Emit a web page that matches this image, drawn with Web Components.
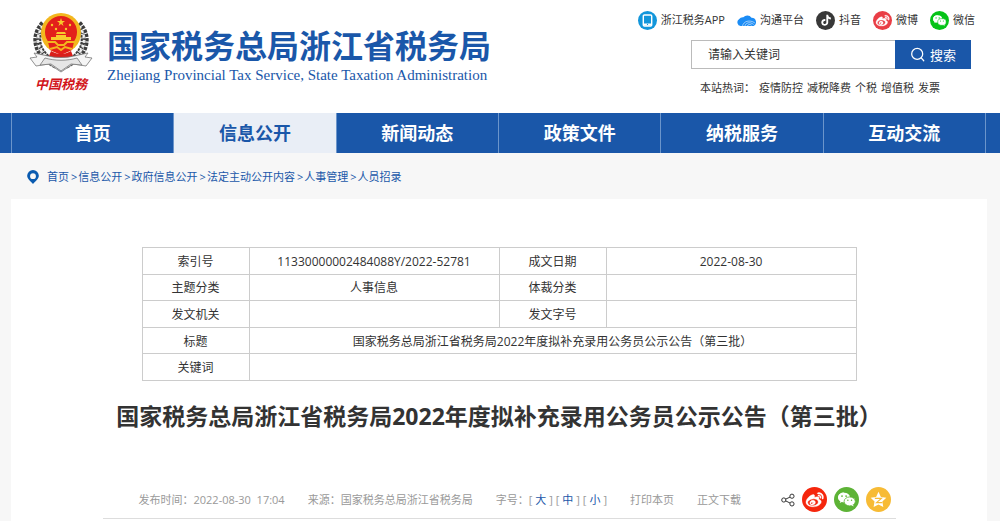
<!DOCTYPE html>
<html lang="zh-CN">
<head>
<meta charset="utf-8">
<meta name="viewport" content="width=device-width, initial-scale=1">
<title>国家税务总局浙江省税务局</title>
<style>
  :root { --blue: #1a57a9; --ink: #333; --muted: #999; --line: #ccc; }
  body { display: flex; flex-direction: column; min-height: 100vh; margin: 0; background: #f7f7f7; color: var(--ink); font: 11px/16px "Open Sans", "Noto Sans CJK SC", sans-serif; }
  main { display: block; flex: 1; margin: 0 13px 0 11px; padding: 48px 0 0; background: #fff; }
</style>
</head>
<body>
<site-header></site-header>
<main-nav>
  <nav-item href="#home">首页</nav-item>
  <nav-item href="#info" current>信息公开</nav-item>
  <nav-item href="#news">新闻动态</nav-item>
  <nav-item href="#policy">政策文件</nav-item>
  <nav-item href="#service">纳税服务</nav-item>
  <nav-item href="#contact">互动交流</nav-item>
</main-nav>
<bread-crumb></bread-crumb>
<main>
  <doc-info></doc-info>
  <article-heading>国家税务总局浙江省税务局2022年度拟补充录用公务员公示公告（第三批）</article-heading>
  <article-meta></article-meta>
</main>

<script>
const define = (name, html, setup) => {
  const template = document.createElement('template');
  template.innerHTML = html;
  customElements.define(name, class extends HTMLElement {
    connectedCallback() {
      if (this.shadowRoot) return;
      this.attachShadow({ mode: 'open' }).append(template.content.cloneNode(true));
      if (setup) setup(this, this.shadowRoot);
    }
  });
};

const WEIBO = '<path d="M10.098 20.323c-3.977.391-7.414-1.406-7.672-4.02-.259-2.609 2.759-5.047 6.74-5.441 3.979-.394 7.413 1.404 7.671 4.018.259 2.6-2.759 5.049-6.737 5.439zM9.05 17.219c-.384.616-1.208.884-1.829.602-.612-.279-.793-.991-.406-1.593.379-.595 1.176-.861 1.793-.601.622.263.82.972.442 1.592zm1.27-1.627c-.141.237-.449.353-.689.253-.236-.09-.313-.361-.177-.586.138-.227.436-.346.672-.24.239.09.315.36.18.601zm.176-2.719c-1.893-.493-4.033.45-4.857 2.118-.836 1.704-.026 3.591 1.886 4.21 1.983.64 4.318-.341 5.132-2.179.8-1.793-.201-3.642-2.161-4.149zm7.563-1.224c-.346-.105-.57-.18-.405-.615.375-.977.42-1.804 0-2.404-.781-1.112-2.915-1.053-5.364-.03 0 0-.766.331-.571-.271.376-1.217.315-2.224-.27-2.809-1.338-1.337-4.869.045-7.888 3.08C1.309 10.87 0 13.273 0 15.348c0 3.981 5.099 6.395 10.086 6.395 6.536 0 10.888-3.801 10.888-6.82 0-1.822-1.547-2.854-2.915-3.284zm1.908-5.092c-.766-.856-1.908-1.187-2.96-.962-.436.09-.706.511-.616.932.09.42.511.691.932.602.511-.105 1.067.044 1.442.465.376.421.466.977.316 1.473-.136.406.089.856.51.992.405.119.857-.105.992-.512.33-1.021.12-2.178-.646-3.035zm2.418-2.195c-1.576-1.757-3.905-2.419-6.054-1.968-.496.104-.812.587-.706 1.081.104.496.586.813 1.082.707 1.532-.331 3.185.15 4.296 1.383 1.112 1.246 1.429 2.943.947 4.416-.165.48.106 1.007.586 1.157.479.165.991-.104 1.157-.586.675-2.088.241-4.478-1.338-6.235z"/>';
const wechat = bg => `<g fill="#fff"><path d="M9.4 4.6c-3.9 0-6.9 2.4-6.9 5.5 0 1.8 1 3.3 2.6 4.3l-.7 2.1 2.4-1.2c.8.2 1.7.3 2.6.3z"/><ellipse cx="9.4" cy="10.1" rx="6.7" ry="5.4"/><ellipse cx="15.8" cy="14.7" rx="6.4" ry="5.1" stroke="${bg}" stroke-width=".9"/><path d="m17.5 18.8 2.7 1.7-.6-2.3z"/></g><g fill="${bg}"><circle cx="7" cy="8.6" r="1"/><circle cx="11.7" cy="8.6" r="1"/><circle cx="13.7" cy="13.3" r=".8"/><circle cx="17.9" cy="13.3" r=".8"/></g>`;
const disc = color => `<circle cx="12" cy="12" r="12" fill="${color}"/>`;

const ICONS = {
  app: disc('#1296db') + '<rect x="6.7" y="5" width="10.6" height="14" rx="1.4" fill="none" stroke="#fff" stroke-width="1.8"/><path d="M7 15.8h10v2.6H7z" fill="#fff"/><circle cx="12" cy="17" r=".8" fill="#1296db"/>',
  cloud: '<path d="M4.500 18.900A4.700 4.700 0 0 1 2.500 10.400 6.200 6.200 0 0 1 8 8 6.500 6.500 0 0 1 18.300 8.500 5.500 5.500 0 0 1 21 18.900z" fill="#1b8cf5"/><path d="M7 19c1-6 9-8.500 15.500-4M10 19c1-4 6-6 11-2M13 19c1-2 3-3 5.500-1" fill="none" stroke="#fff" stroke-width=".7"/>',
  douyin: disc('#383838') + '<path transform="translate(5.800 4.800) scale(.58)" d="M12.525.02c1.310-.02 2.610-.01 3.910-.02.08 1.530.63 3.090 1.750 4.170 1.120 1.110 2.700 1.620 4.240 1.790v4.030c-1.440-.05-2.890-.35-4.200-.97-.57-.26-1.100-.59-1.620-.93-.01 2.920.01 5.840-.02 8.750-.08 1.400-.54 2.790-1.350 3.940-1.310 1.920-3.580 3.170-5.910 3.210-1.430.08-2.860-.31-4.080-1.030-2.020-1.190-3.440-3.370-3.650-5.710-.02-.5-.03-1-.01-1.490.18-1.900 1.120-3.720 2.580-4.960 1.660-1.440 3.980-2.130 6.150-1.720.02 1.480-.04 2.960-.04 4.440-.99-.32-2.150-.23-3.020.37-.63.41-1.110 1.040-1.360 1.750-.21.51-.15 1.070-.14 1.610.24 1.640 1.820 3.020 3.500 2.870 1.120-.01 2.190-.66 2.770-1.610.19-.33.4-.67.41-1.060.1-1.790.06-3.570.07-5.360.01-4.030-.01-8.050.02-12.070z" fill="#fff"/>',
  weibo: disc('#e93e46') + `<g transform="translate(3.800 3.800) scale(.7)" fill="#fff" stroke="#fff" stroke-width=".5">${WEIBO}</g>`,
  wechat: disc('#05c317') + `<g transform="translate(1.800 1.500) scale(.84)">${wechat('#05c317')}</g>`,
  'share-weibo': disc('#f5260d') + `<g transform="translate(3.800 3.800) scale(.7)" fill="#fff" stroke="#fff" stroke-width=".5">${WEIBO}</g>`,
  'share-wechat': disc('#5db336') + `<g transform="translate(1.800 1.500) scale(.84)">${wechat('#5db336')}</g>`,
  'share-qzone': disc('#f7bb35') + '<path d="m12 4.600 2.300 4.900 5.200.7-3.800 3.700.9 5.300-4.600-2.500-4.700 2.500.9-5.300-3.700-3.700 5.200-.7z" fill="#fff"/><path d="M8.500 10.900h6.300l-4.700 4.100h5.600" fill="none" stroke="#f7bb35" stroke-width="1.100"/>',
  share: '<g fill="none" stroke="#333" stroke-width="1.700"><circle cx="4.800" cy="12" r="3.600"/><circle cx="18.800" cy="5.500" r="3.600"/><circle cx="18.800" cy="18.700" r="3.600"/><path d="m8 10.500 7.500-3.500M8 13.500l7.500 3.700"/></g>',
  search: '<g fill="none" stroke="#fff" stroke-width="2" stroke-linecap="round"><circle cx="11.500" cy="11" r="8.800"/><path d="m18 17.500 4 4.500"/></g>',
  pin: '<path d="M12 0a10 10 0 0 0-10 10c0 5 5 9 10 14 5-5 10-9 10-14A10 10 0 0 0 12 0zm0 5.500a5 5 0 1 1 0 10 5 5 0 0 1 0-10z" fill="#0a5bb0" fill-rule="evenodd"/>'
};

define('ui-icon', `
  <style>
    :host { display: block; flex: none; width: var(--icon, 19px); height: var(--icon, 19px); }
    svg { display: block; width: 100%; height: 100%; }
  </style>
  <svg viewBox="0 0 24 24" aria-hidden="true"></svg>`,
  (host, root) => { root.querySelector('svg').innerHTML = ICONS[host.getAttribute('name')]; });

define('tax-emblem', `
  <style>
    :host { display: flex; flex-direction: column; align-items: center; width: 64px; flex: none; }
    svg { display: block; width: 64px; height: 62px; }
    span { font-size: 13px; line-height: 20px; font-weight: 700; font-style: italic; color: #d2151b; white-space: nowrap; }
  </style>
  <svg viewBox="0 0 64 62" role="img" aria-label="税务徽标">
    <g fill="none">
      <path d="M15 12C3 25 7 43 28 53M49 12c12 13 8 31-13 41" stroke="#3d3d3d" stroke-width="8" stroke-dasharray="3 1"/>
      <path d="M14 14C4 27 9 42 27 51M50 14c10 13 5 28-13 37" stroke="#eee" stroke-width="2.500" stroke-dasharray="3 2"/>
      <path d="M11 17C4 29 8 42 24 50M53 17c7 12 3 25-13 33" stroke="#aaa" stroke-width="1" stroke-dasharray="2 2"/>
    </g>
    <circle cx="32" cy="21" r="20" fill="#f3b71e"/>
    <circle cx="32" cy="20" r="16" fill="#e3201b"/>
    <g fill="#f8ca2c">
      <path d="m32 6 1 3h3l-2.500 2 1 3-2.500-2-2.500 2 1-3L28 9h3z"/>
      <circle cx="23" cy="13" r="1.200"/><circle cx="41" cy="13" r="1.200"/><circle cx="27" cy="17" r="1.200"/><circle cx="37" cy="17" r="1.200"/>
      <path d="m27 22 1-2h8l1 2zm0 1h10v2h5v3H22v-3h5z"/>
    </g>
    <path d="M19 30h26l-2 8-11 5-11-5z" fill="#e3201b"/>
    <path d="M18 30h8l3 3h6l3-3h8M21 37l7-2 4 3 4-3 7 2" fill="none" stroke="#f3b71e" stroke-width="2"/>
    <path d="M22 39c7 4 13 4 20 0l2 5c-8 4-16 4-24 0z" fill="#d91f1b"/>
    <g fill="#f5f5f5" stroke="#777" stroke-width=".8">
      <path d="m1 46 7-1-3-4 14 3c7 2 19 2 26 0l14-3-3 4 7 1-6 8-13-2-12 8-12-8-13 2z"/>
      <path d="m11 53 5-7c10 3 22 3 32 0l5 7-11-1-10 7-10-7z" fill="#e6e6e6"/>
    </g>
  </svg>
  <span>中国税務</span>`);

define('quick-link', `
  <style>
    :host { display: block; }
    a { display: flex; align-items: center; gap: 4px; color: var(--ink); text-decoration: none; white-space: nowrap; }
  </style>
  <a href="#"><slot></slot></a>`,
  (host, root) => {
    const icon = document.createElement('ui-icon');
    icon.setAttribute('name', host.getAttribute('icon'));
    root.querySelector('a').prepend(icon);
  });

define('site-search', `
  <style>
    :host { display: block; }
    form { display: flex; height: 29px; }
    input { flex: 1; min-width: 0; box-sizing: border-box; margin: 0; padding: 0 16px; border: 1px solid #bbb; border-right: 0; border-radius: 0; font: inherit; font-size: 12px; color: var(--ink); background: #fff; }
    input::placeholder { color: var(--ink); opacity: 1; }
    button { display: flex; align-items: center; justify-content: center; gap: 5px; width: 76px; padding: 0; border: 0; background: var(--blue); color: #fff; font: inherit; font-size: 13px; cursor: pointer; --icon: 15px; }
  </style>
  <form onsubmit="return false">
    <input type="text" aria-label="搜索关键词" placeholder="请输入关键词">
    <button type="submit"><ui-icon name="search"></ui-icon>搜索</button>
  </form>`);

define('site-header', `
  <style>
    :host { display: block; background: #fff; }
    header { display: flex; justify-content: space-between; min-height: 113px; box-sizing: border-box; padding: 10px 25px 12px 29px; }
    .brand { display: flex; gap: 14px; padding-top: 2px; }
    .names { padding-top: 14px; color: var(--blue); white-space: nowrap; }
    h1 { margin: 0; font-size: 32px; line-height: 40px; font-weight: 700; }
    .names p { margin: 0; font: 15px/18px "Liberation Serif", serif; }
    .tools { display: flex; flex-direction: column; }
    .quick { display: flex; justify-content: flex-end; gap: 12px; height: 20px; align-items: center; }
    site-search { width: 280px; margin: 10px 4px 0 auto; }
    .hot { display: flex; gap: 4px; width: 271px; margin: 11px 4px 0 auto; white-space: nowrap; }
    .hot a { color: inherit; text-decoration: none; }
  </style>
  <header>
    <div class="brand">
      <tax-emblem></tax-emblem>
      <div class="names">
        <h1>国家税务总局浙江省税务局</h1>
        <p>Zhejiang Provincial Tax Service, State Taxation Administration</p>
      </div>
    </div>
    <div class="tools">
      <div class="quick">
        <quick-link icon="app">浙江税务APP</quick-link>
        <quick-link icon="cloud">沟通平台</quick-link>
        <quick-link icon="douyin">抖音</quick-link>
        <quick-link icon="weibo">微博</quick-link>
        <quick-link icon="wechat">微信</quick-link>
      </div>
      <site-search></site-search>
      <div class="hot"><span>本站热词：</span><a href="#">疫情防控</a><a href="#">减税降费</a><a href="#">个税</a><a href="#">增值税</a><a href="#">发票</a></div>
    </div>
  </header>`);

define('main-nav', `
  <style>
    :host { display: block; background: var(--blue); padding: 0 14px 0 11px; }
    nav { display: grid; grid-template-columns: repeat(6, 1fr); border-right: 1px solid #6b95cb; }
  </style>
  <nav aria-label="主导航"><slot></slot></nav>`);

define('nav-item', `
  <style>
    :host { display: block; border-left: 1px solid #6b95cb; }
    a { display: block; font-size: 18px; line-height: 40px; font-weight: 700; text-align: center; color: #fff; text-decoration: none; }
    :host([current]) a { background: #e9eef6; color: var(--blue); }
  </style>
  <a><slot></slot></a>`,
  (host, root) => { root.querySelector('a').href = host.getAttribute('href'); });

define('bread-crumb', `
  <style>
    :host { display: block; padding: 16px 26px 14px; color: var(--blue); --icon: 14px; }
    nav { display: flex; align-items: center; white-space: nowrap; }
    ui-icon { margin-right: 7px; }
    a { color: inherit; text-decoration: none; }
    span { padding: 0 1px 0 2px; }
  </style>
  <nav aria-label="当前位置"><ui-icon name="pin"></ui-icon><a href="#">首页</a><span>&gt;</span><a href="#">信息公开</a><span>&gt;</span><a href="#">政府信息公开</a><span>&gt;</span><a href="#">法定主动公开内容</a><span>&gt;</span><a href="#">人事管理</a><span>&gt;</span><a href="#">人员招录</a></nav>`);

define('doc-info', `
  <style>
    :host { display: block; width: 74%; max-width: 715px; margin: 0 auto; }
    table { width: 100%; height: 134px; table-layout: fixed; border-collapse: collapse; font-size: 12px; line-height: 18px; text-align: center; }
    th, td { padding: 2px 0 0; border: 1px solid var(--line); font-weight: 400; }
    .label { width: 15%; }
  </style>
  <table>
    <colgroup><col class="label"><col><col class="label"><col></colgroup>
    <tbody>
      <tr><th scope="row">索引号</th><td>11330000002484088Y/2022-52781</td><th scope="row">成文日期</th><td>2022-08-30</td></tr>
      <tr><th scope="row">主题分类</th><td>人事信息</td><th scope="row">体裁分类</th><td></td></tr>
      <tr><th scope="row">发文机关</th><td></td><th scope="row">发文字号</th><td></td></tr>
      <tr><th scope="row">标题</th><td colspan="3">国家税务总局浙江省税务局2022年度拟补充录用公务员公示公告（第三批）</td></tr>
      <tr><th scope="row">关键词</th><td colspan="3"></td></tr>
    </tbody>
  </table>`);

define('article-heading', `
  <style>
    :host { display: block; margin: 17px 0 53px; }
    h2 { margin: 0; font-size: 23px; line-height: 36px; font-weight: 700; text-align: center; }
  </style>
  <h2><slot></slot></h2>`);

define('article-meta', `
  <style>
    :host { display: block; width: 82%; max-width: 793px; margin: 0 auto; border-bottom: 1px solid #ddd; color: var(--muted); }
    div { display: flex; align-items: center; }
    .row { justify-content: space-between; padding: 0 5px 6px 36px; white-space: nowrap; }
    .facts { gap: 23px; }
    .share { gap: 7px; --icon: 25px; }
    .share > ui-icon { --icon: 14px; }
    a { color: inherit; text-decoration: none; }
    button { padding: 0 3px; border: 0; background: none; font: inherit; color: var(--blue); cursor: pointer; }
    .time { white-space: pre; }
  </style>
  <div class="row">
    <div class="facts">
      <span class="time">发布时间：2022-08-30  17:04</span>
      <span>来源：国家税务总局浙江省税务局</span>
      <span>字号：[<button>大</button>] [<button>中</button>] [<button>小</button>]</span>
      <a href="#">打印本页</a>
      <a href="#">正文下载</a>
    </div>
    <div class="share">
      <ui-icon name="share"></ui-icon>
      <a href="#" aria-label="分享到微博"><ui-icon name="share-weibo"></ui-icon></a>
      <a href="#" aria-label="分享到微信"><ui-icon name="share-wechat"></ui-icon></a>
      <a href="#" aria-label="分享到QQ空间"><ui-icon name="share-qzone"></ui-icon></a>
    </div>
  </div>`);
</script>
</body>
</html>
